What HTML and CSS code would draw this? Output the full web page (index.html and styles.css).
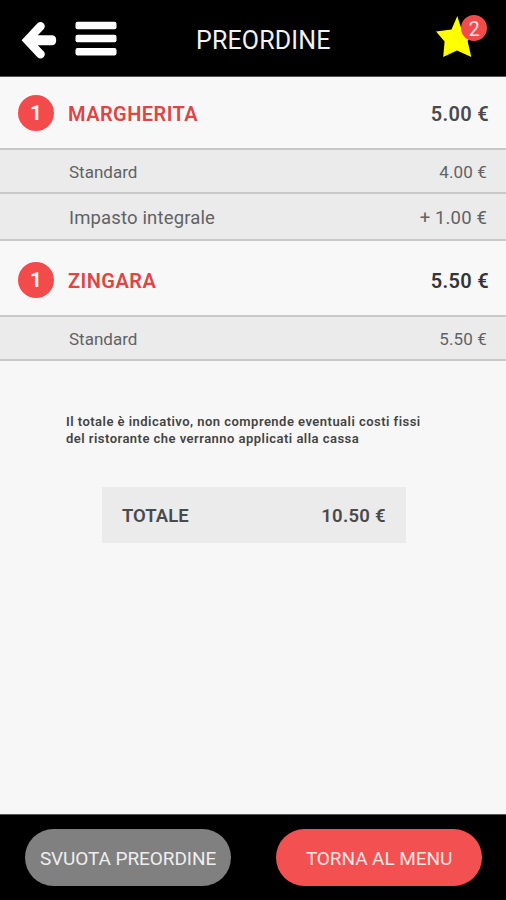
FILE: index.html
```html
<!DOCTYPE html>
<html lang="it">
<head>
<meta charset="utf-8">
<title>Preordine</title>
<link rel="stylesheet" href="styles.css">
</head>
<body>
<header class="topbar">
  <svg class="back" width="36" height="38" viewBox="0 0 36 38"><path d="M0.6 19.2 16.5 2.2Q19.5-.2 22.5 2.2 25 5 22.8 8L16.8 14.3H31.5Q35.2 15 35.2 19.2 35.2 23.8 31.5 24.2H16.8L22.8 30.5Q25 33.4 22.5 36.2 19.5 38.6 16.5 36.2Z" fill="#fff"/></svg>
  <svg class="menu" width="42" height="36" viewBox="0 0 42 36" fill="#fff"><rect x=".5" y=".8" width="41" height="7.4" rx="2"/><rect x=".5" y="13.8" width="41" height="7.4" rx="2"/><rect x=".5" y="27" width="41" height="7.4" rx="2"/></svg>
  <h1 class="title">PREORDINE</h1>
  <div class="favorites">
    <svg width="40" height="42" viewBox="0 0 40 42"><path d="M21.3 0 26 14.8 39 14.8 31.6 25 35.3 41 21 34.5 7.2 41 8.6 25.5 0 15.5 15.5 13.4Z" fill="#ff0"/></svg>
    <span class="badge">2</span>
  </div>
</header>
<main class="content">
  <section class="dish">
    <div class="item first"><span class="count">1</span><span class="name margherita">MARGHERITA</span><span class="price">5.00 €</span></div>
    <div class="option"><span>Standard</span><span class="cost">4.00 €</span></div>
    <div class="option extra"><span>Impasto integrale</span><span class="cost">+ 1.00 €</span></div>
  </section>
  <section class="dish">
    <div class="item second"><span class="count">1</span><span class="name zingara">ZINGARA</span><span class="price dark">5.50 €</span></div>
    <div class="option"><span>Standard</span><span class="cost">5.50 €</span></div>
  </section>
  <p class="note">Il totale è indicativo, non comprende eventuali costi fissi<br>del ristorante che verranno applicati alla cassa</p>
  <div class="total"><span class="total-label">TOTALE</span><span class="total-price">10.50 €</span></div>
</main>
<footer class="bottombar">
  <button class="button clear">SVUOTA PREORDINE</button>
  <button class="button back-menu">TORNA AL MENU</button>
</footer>
</body>
</html>
```
FILE: styles.css
```css
* { box-sizing: border-box; }
body {
  margin: 0;
  width: 506px;
  height: 900px;
  display: flex;
  flex-direction: column;
  background: #f7f7f7;
  color: #4a4a4c;
  font-family: Roboto, "Liberation Sans", sans-serif;
  overflow: hidden;
}
.topbar {
  height: 77px;
  flex: none;
  display: flex;
  align-items: flex-start;
  background: #000;
  border-bottom: 1px solid #555;
}
.back { margin: 21px 0 0 21px; }
.menu { margin: 21px 0 0 18px; }
.title {
  margin: 26px 0 0 79px;
  width: 139px;
  color: #f2f2f2;
  font-size: 25px;
  line-height: 30px;
  font-weight: 400;
  letter-spacing: .15px;
  white-space: nowrap;
}
.favorites { position: relative; margin: 16px 0 0 101px; height: 42px; }
.badge {
  position: absolute;
  left: 25px;
  top: -1px;
  width: 26px;
  height: 26px;
  border-radius: 50%;
  background: #f34b4b;
  color: #ffe5e5;
  font-size: 20px;
  line-height: 28px;
  text-align: center;
}
.content { flex: 1; }
.item {
  height: 73px;
  padding: 0 17px 0 18px;
  display: flex;
  align-items: center;
  border-bottom: 2px solid #c9c9c9;
  background: #f8f8f8;
}
.second { height: 76px; padding-bottom: 1px; padding-top: 4px; }
.count {
  width: 36px;
  height: 36px;
  margin-right: 14px;
  border-radius: 50%;
  background: #f34b4b;
  color: #fff0f0;
  font-size: 21px;
  font-weight: 700;
  line-height: 37px;
  text-align: center;
}
.name {
  padding-top: 2px;
  color: #e04444;
  font-size: 20px;
  font-weight: 600;
  letter-spacing: .45px;
}
.price {
  margin-left: auto;
  padding-top: 2px;
  font-size: 20px;
  font-weight: 600;
  letter-spacing: .3px;
}
.dark { color: #343436; }
.option {
  height: 44px;
  padding: 2px 19px 0 69px;
  display: flex;
  align-items: center;
  justify-content: space-between;
  border-bottom: 2px solid #c9c9c9;
  background: #ebebeb;
  color: #626264;
  font-size: 17px;
}
.cost { letter-spacing: .15px; }
.extra { height: 47px; padding-top: 3px; font-size: 18.5px; letter-spacing: .15px; }
.note {
  margin: 53px 0 0 66px;
  color: #444;
  font-size: 13px;
  font-weight: 600;
  line-height: 16.5px;
  letter-spacing: .47px;
  white-space: nowrap;
}
.total {
  width: 304px;
  height: 56px;
  margin: 40px 0 0 102px;
  padding: 2px 20px 0;
  display: flex;
  align-items: center;
  justify-content: space-between;
  background: #ebebeb;
  font-size: 18.5px;
  font-weight: 600;
}
.total-price { letter-spacing: .3px; }
.bottombar {
  height: 86px;
  flex: none;
  padding: 14px 24px 0 25px;
  display: flex;
  justify-content: space-between;
  border-top: 1px solid #555;
  background: #000;
}
.button {
  width: 206px;
  height: 57px;
  padding: 1px 0 0;
  border: 0;
  border-radius: 29px;
  font-family: inherit;
  font-size: 19px;
  letter-spacing: -.08px;
  white-space: nowrap;
}
.clear { background: #808080; color: #eee; }
.back-menu { background: #f35151; color: #ffe5e5; }
```
